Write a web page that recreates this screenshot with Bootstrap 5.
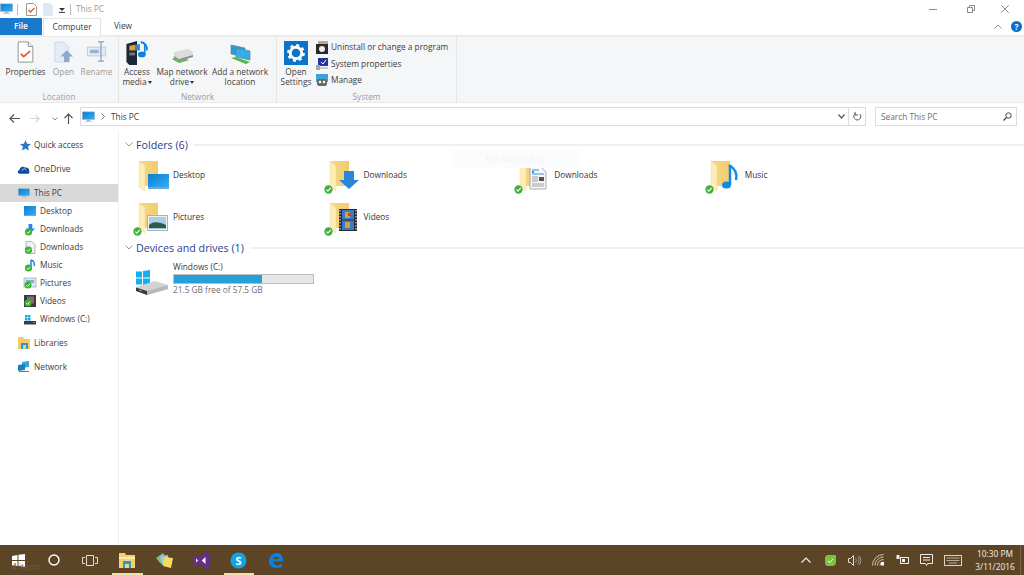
<!DOCTYPE html>
<html lang="en">
<head>
<meta charset="utf-8">
<title>This PC</title>
<link href="https://cdn.jsdelivr.net/npm/bootstrap@5.3.0/dist/css/bootstrap.min.css" rel="stylesheet">
<style>
html,body{height:100%;overflow:hidden;background:#fff}
body{font-family:"Open Sans","Noto Sans","Liberation Sans",sans-serif;font-size:8.3px;line-height:10px;color:#3a3a3a}
svg{display:block;flex:none;overflow:visible}
.shell{width:1024px;height:575px;position:relative}
.ttl{height:18px}
.ttl-sep{width:1px;height:11px;background:#b9b9b9}
.ttl-name{color:#9a9a9a;margin-left:5px}
.m4{margin-left:4px}.m5{margin-left:5px}.m6{margin-left:6px}.m8{margin-left:8px}
.wctl{margin-left:auto;gap:26px;padding-right:15px}
.tabrow{height:17px}
.tb-file{width:42px;background:#1979ca;color:#fff;line-height:16px;text-align:center;font-weight:600}
.tb-on{width:58px;margin-left:1px;line-height:15px;text-align:center;border:1px solid #e4e4e4;border-bottom:0;background:#fff;height:18px;position:relative;z-index:1}
.tb-off{width:44px;line-height:16px;text-align:center}
.helpers{margin-left:auto;gap:9px;padding-right:2px}
.rib{height:68px;background:#f5f6f7;border-top:2px solid #ebebeb;border-bottom:1px solid #e9e9e9}
.rgrp{height:66px;border-right:1px solid #e4e5e6;padding-top:4px;position:relative}
.g1{width:119px;padding-left:4px}.g2{width:158px}.g3{width:180px}
.rlabel{position:absolute;left:0;right:0;bottom:1px;text-align:center;color:#9c9c9c}
.rbtn{text-align:center;color:#3f3f3f;line-height:10px}
.ico{height:24px;margin-bottom:2px}
.ico svg{margin:0 auto}
.off{color:#9b9b9b}
.w43{width:43px}.w33{width:33px}.w36{width:36px}.w54{width:54px}.w62{width:62px}.w38{width:38px}
.caret{display:inline-block;border-top:3px solid #333;border-left:2px solid transparent;border-right:2px solid transparent;vertical-align:1px;margin-left:1px}
.rsmall{height:16.5px;gap:3px;padding-left:1px;white-space:nowrap}
.smallcol{margin-top:-2px}
.addr{height:27px;padding-top:4px}
.nav-ic{width:20px}
.pathbox{width:769px;height:19px;border:1px solid #dcdcdc;margin-left:7px;padding:0 3px 0 1px;gap:6px}
.refbox{width:17px;height:19px;border:1px solid #dcdcdc;border-left:0}
.srch{width:142px;height:19px;border:1px solid #dcdcdc;margin-left:9px;padding:0 4px 0 5px;color:#6e6e6e}
.body-row{height:415px}
.side{width:119px;border-right:1px solid #f0f0f0;padding-top:6px;flex:none}
.srow{height:18px;padding-left:18px;gap:4px;white-space:nowrap}
.srow.sub{padding-left:24px}
.srow.cur{background:#d9d9d9;width:118px}
.sgap{height:6px}
.star{margin-left:2px;margin-right:-1px}
.pane{flex:1;padding:5px 0 0 6px;position:relative}
.hd{height:19px;color:#2a3d92;font-size:10.7px;gap:3px;white-space:nowrap}
.hd i{display:block;flex:1;height:2px;background:#f0f0f0;margin-left:3px}
.tiles{display:grid;grid-template-columns:repeat(4,190.6px);grid-auto-rows:42px;padding-left:11px}
.tile{gap:3px;color:#333}
.drive{gap:4px;padding-top:5px;padding-left:10px;height:40px}
.drive svg{margin-top:8px}
.dname{margin-bottom:2px}
.dbar{width:141px;height:10px;background:#e6e6e6;border:1px solid #bcbcbc}
.dfill{height:100%;background:#26a0da}
.dfree{color:#6d6d6d;margin-top:1px}
.ghost{position:absolute;left:332px;top:20px;width:130px;height:18px;background:#fbfcfe;color:#f1f3f6;text-align:center;line-height:18px}
.tbar{height:30px;background:#5c4427;color:#fff;position:relative}
.tb36{width:36px;height:30px}
.tb37{width:37px;height:30px;position:relative}
.tb38{width:38px;height:30px;position:relative}
.runb::after{content:"";position:absolute;left:4px;right:3px;bottom:0;height:2px;background:#f3dcb0}
.tray{margin-left:auto;height:30px;padding-right:3px}
.tr-i{height:30px;width:24px}
.tr-w{width:30px}
.clock{width:50px;text-align:center;line-height:13px;color:#f4efe6;margin-left:2px}
.gitems{position:absolute;left:12px;top:17px;color:#6e5a42}
.edge-r{width:1px;height:30px;background:#7a6548}
</style>
</head>
<body>
<svg width="0" height="0" class="position-absolute">
<defs>
<linearGradient id="fd" x1="0" y1="0" x2="1" y2="0"><stop offset="0" stop-color="#f7d98a"/><stop offset="1" stop-color="#f2cb6c"/></linearGradient>
<linearGradient id="sc" x1="0" y1="0" x2="1" y2="1"><stop offset="0" stop-color="#0b7fd6"/><stop offset="1" stop-color="#35adf0"/></linearGradient>
<symbol id="folder" viewBox="0 0 34 34">
<path d="M3 3h19v25H9z" fill="url(#fd)"/>
<path d="M3 3l6 5v25l-6-4z" fill="#fdeeb8" stroke="#ecd58d" stroke-width=".4"/>
</symbol>
<symbol id="chk" viewBox="0 0 10 10"><circle cx="5" cy="5" r="4.600" fill="#3fb23a"/><path d="M2.600 5.200l1.700 1.700 3.200-3.600" fill="none" stroke="#fff" stroke-width="1.200"/></symbol>
<symbol id="pc" viewBox="0 0 14 12"><rect x=".5" y=".5" width="13" height="8" fill="url(#sc)" stroke="#8aa7c0" stroke-width=".6"/><rect x="5" y="9" width="4" height="1.400" fill="#a9b5c0"/><rect x="3" y="10.300" width="8" height="1.200" fill="#c6ced6"/></symbol>
<symbol id="mini-dl" viewBox="0 0 12 14"><path d="M4.500 1h4v5h3l-5 5-5-5h3z" fill="#2b86d9"/></symbol>
</defs>
</svg>

<div class="shell d-flex flex-column">
  <div class="ttl d-flex align-items-center">
    <svg width="13" height="12"><use href="#pc"/></svg>
    <span class="ttl-sep m4"></span>
    <svg class="m8" width="11" height="13" viewBox="0 0 11 13"><path d="M.5.500h7l3 3v9H.5z" fill="#fff" stroke="#9a9a9a"/><path d="M2.500 7l2 2 4-4" fill="none" stroke="#e4572a" stroke-width="1.300"/></svg>
    <svg class="m6" width="10" height="13" viewBox="0 0 10 13"><path d="M0 0h7l3 3v10H0z" fill="#dfe8f5"/></svg>
    <svg class="m6" width="6" height="7" viewBox="0 0 6 7"><path d="M0 2h6L3 5z" fill="#333"/><path d="M0 6.400h6" stroke="#333"/></svg>
    <span class="ttl-sep m5"></span>
    <span class="ttl-name">This PC</span>
    <div class="wctl d-flex align-items-center">
      <svg width="8" height="8" viewBox="0 0 8 8"><path d="M0 4.500h8" stroke="#8a8a8a"/></svg>
      <svg width="8" height="8" viewBox="0 0 8 8" class="ms-1"><path d="M.5 2.500h5v5h-5zM2.500 2.500v-2h5v5h-2" fill="none" stroke="#8a8a8a"/></svg>
      <svg width="8" height="8" viewBox="0 0 8 8"><path d="M.3.300l7.400 7.400M7.700.300L.3 7.700" stroke="#8a8a8a"/></svg>
    </div>
  </div>

  <div class="tabrow d-flex">
    <div class="tb-file">File</div>
    <div class="tb-on">Computer</div>
    <div class="tb-off">View</div>
    <div class="helpers d-flex align-items-center">
      <svg width="8" height="5" viewBox="0 0 8 5"><path d="M.5 4.500L4 1l3.500 3.500" fill="none" stroke="#9a9a9a"/></svg>
      <svg width="11" height="11" viewBox="0 0 11 11"><circle cx="5.500" cy="5.500" r="5.500" fill="#0b6fc7"/><text x="5.500" y="8.500" font-size="8.500" font-weight="700" text-anchor="middle" fill="#fff" font-family="Open Sans">?</text></svg>
    </div>
  </div>

  <div class="rib d-flex">
    <div class="rgrp g1 d-flex">
      <div class="rbtn w43">
        <div class="ico"><svg width="17" height="22" viewBox="0 0 18 24"><path d="M1 1h11l5 5v17H1z" fill="#fff" stroke="#8c8c8c"/><path d="M12 1v5h5" fill="#eee" stroke="#8c8c8c"/><path d="M4 14l3 3 7-6" fill="none" stroke="#e5532a" stroke-width="1.800"/></svg></div>
        Properties
      </div>
      <div class="rbtn w33 off">
        <div class="ico"><svg width="20" height="22" viewBox="0 0 22 24"><path d="M1 1h10l5 5v17H1z" fill="#e3ebf7" stroke="#c9d6e8"/><path d="M14 10l7 7h-4v6h-6v-6H7z" fill="#8fa9c6"/></svg></div>
        Open
      </div>
      <div class="rbtn w33 off">
        <div class="ico"><svg width="22" height="21" viewBox="0 0 24 24"><rect x="1" y="7" width="21" height="10" fill="#e3ebf7" stroke="#b9c8da"/><rect x="4" y="10" width="10" height="4" fill="#9db3cc"/><path d="M13 1h7M16.500 1v22M13 23h7" stroke="#8ba3bf" stroke-width="1.500" fill="none"/></svg></div>
        Rename
      </div>
      <div class="rlabel">Location</div>
    </div>
    <div class="rgrp g2 d-flex">
      <div class="rbtn w36">
        <div class="ico"><svg width="24" height="24" viewBox="0 0 24 25"><path d="M1 3l11-3v25H4L1 22z" fill="#1d2733"/><path d="M4 5l6-1v6H4z" fill="#d9a13b"/><path d="M10 4l5-1v7h-5z" fill="#3a84c9"/><path d="M4 12h6v3H4z" fill="#6c7a89"/><path d="M16 1c5 1 7 5 6 9" fill="none" stroke="#0f7fe0" stroke-width="2"/><ellipse cx="17" cy="14" rx="4" ry="3" fill="#0f7fe0"/><path d="M20 14V3" stroke="#0f7fe0" stroke-width="1.600"/></svg></div>
        Access<br>media<span class="caret"></span>
      </div>
      <div class="rbtn w54">
        <div class="ico"><svg width="23" height="24" viewBox="0 0 23 24"><path d="M3 11l14-3 5 3v3L8 18l-5-3z" fill="#dcdcdc"/><path d="M3 15l5 3 14-4v2L8 20l-5-3z" fill="#8b8b8b"/><path d="M1 18l7 4 10-3-3-1-7 2-5-3z" fill="#4fb748"/></svg></div>
        Map network<br>drive<span class="caret"></span>
      </div>
      <div class="rbtn w62">
        <div class="ico"><svg width="21" height="24" viewBox="0 0 21 24"><path d="M1 4l14 3v9L1 13z" fill="#21a0e0" stroke="#67808f" stroke-width=".7"/><path d="M6 7l14 3v9L6 16z" fill="#35aee6" stroke="#67808f" stroke-width=".7"/><path d="M1 17l15 6 4-2-15-5z" fill="#4fb748"/></svg></div>
        Add a network<br>location
      </div>
      <div class="rlabel">Network</div>
    </div>
    <div class="rgrp g3 d-flex">
      <div class="rbtn w38">
        <div class="ico"><svg width="24" height="24" viewBox="0 0 25 25"><rect width="25" height="25" fill="#0b74c9"/><circle cx="12.500" cy="12.500" r="6" fill="none" stroke="#fff" stroke-width="3"/><circle cx="12.500" cy="12.500" r="8" fill="none" stroke="#fff" stroke-width="2.500" stroke-dasharray="3.100 3.180"/></svg></div>
        Open<br>Settings
      </div>
      <div class="smallcol">
        <div class="rsmall d-flex align-items-center"><svg width="12" height="13" viewBox="0 0 12 13"><rect y="3" width="12" height="10" fill="#2a2a2a"/><rect x="2" y="0" width="10" height="3" fill="#b9a98c"/><circle cx="6" cy="8" r="3" fill="#eee"/></svg>Uninstall or change a program</div>
        <div class="rsmall d-flex align-items-center"><svg width="12" height="12" viewBox="0 0 12 12"><rect x="2" y="0" width="10" height="8" fill="#27349a"/><path d="M5 4l2 2 3-4" stroke="#fff" fill="none"/><rect y="7" width="4" height="5" fill="#9ea7ad"/><rect x="4" y="9" width="8" height="2" fill="#c4cbd1"/></svg>System properties</div>
        <div class="rsmall d-flex align-items-center"><svg width="12" height="12" viewBox="0 0 12 12"><rect width="12" height="8" fill="#3ea0dc"/><rect x="1" y="5" width="10" height="7" rx="2" fill="#6b6b6b"/><circle cx="4" cy="8" r="1.200" fill="#fff"/><circle cx="8" cy="8" r="1.200" fill="#fff"/></svg>Manage</div>
      </div>
      <div class="rlabel">System</div>
    </div>
  </div>

  <div class="addr d-flex">
    <div class="nav-ic d-flex justify-content-end align-items-center ps-2"><svg width="11" height="9" viewBox="0 0 11 9"><path d="M5 .5L1 4.500l4 4M1 4.500h10" fill="none" stroke="#555" stroke-width="1.200"/></svg></div>
    <div class="nav-ic d-flex justify-content-end align-items-center"><svg width="10" height="9" viewBox="0 0 11 9"><path d="M6 .5l4 4-4 4M10 4.500H0" fill="none" stroke="#d4d4d4" stroke-width="1.200"/></svg></div>
    <div class="d-flex align-items-center ms-2 ps-1"><svg width="6" height="4" viewBox="0 0 6 4"><path d="M.5.500L3 3 5.500.500" fill="none" stroke="#8a8a8a"/></svg></div>
    <div class="d-flex align-items-center m6"><svg width="9" height="11" viewBox="0 0 9 11"><path d="M.5 5L4.500 1l4 4M4.500 1v10" fill="none" stroke="#555" stroke-width="1.200"/></svg></div>
    <div class="pathbox d-flex align-items-center">
      <svg width="13" height="12"><use href="#pc"/></svg>
      <svg width="4" height="7" viewBox="0 0 4 7"><path d="M.5.500l3 3-3 3" fill="none" stroke="#777"/></svg>
      <span>This PC</span>
      <svg class="ms-auto" width="7" height="5" viewBox="0 0 7 5"><path d="M.5.500L3.500 4l3-3.500" fill="none" stroke="#555" stroke-width="1.200"/></svg>
    </div>
    <div class="refbox d-flex align-items-center justify-content-center"><svg width="9" height="9" viewBox="0 0 9 9"><path d="M6.800 2A3.500 3.500 0 1 1 2.500 1.500M2 0v3h3" fill="none" stroke="#555"/></svg></div>
    <div class="srch d-flex align-items-center justify-content-between">
      <span>Search This PC</span>
      <svg width="9" height="9" viewBox="0 0 9 9"><circle cx="5.500" cy="3.500" r="2.700" fill="none" stroke="#444"/><path d="M3.500 5.500L.5 8.500" stroke="#444" stroke-width="1.300"/></svg>
    </div>
  </div>

  <div class="body-row d-flex flex-grow-1">
    <nav class="side">
      <div class="srow d-flex align-items-center"><svg class="star" width="11" height="11" viewBox="0 0 11 11"><path d="M5.500 0l1.600 3.700 3.900.3-3 2.600.9 4-3.400-2.100L2 10.600l.9-4-3-2.600 4-.3z" fill="#2a78c8"/></svg><span>Quick access</span></div>
      <div class="sgap"></div>
      <div class="srow d-flex align-items-center"><svg width="12" height="9" viewBox="0 0 13 9"><path d="M2 9a2 2 0 0 1-.5-4A4 4 0 0 1 8 2.500 3 3 0 0 1 12 6a2 2 0 0 1-1 3z" fill="#0e4fa3"/><path d="M4 5.500l3-2 2 1.500" fill="none" stroke="#fff" stroke-width=".7"/></svg><span>OneDrive</span></div>
      <div class="sgap"></div>
      <div class="srow cur d-flex align-items-center"><svg width="12" height="11"><use href="#pc"/></svg><span>This PC</span></div>
      <div class="srow sub d-flex align-items-center"><svg width="12" height="10" viewBox="0 0 12 10"><rect width="12" height="9" fill="url(#sc)"/><rect y="9" width="12" height="1" fill="#6ca9d6"/></svg><span>Desktop</span></div>
      <div class="srow sub d-flex align-items-center"><svg width="12" height="13" viewBox="0 0 12 13"><use href="#mini-dl"/><circle cx="4.500" cy="9" r="3.600" fill="#3fb23a"/><path d="M2.800 9.100l1.300 1.300 2.300-2.600" fill="none" stroke="#fff" stroke-width=".9"/></svg><span>Downloads</span></div>
      <div class="srow sub d-flex align-items-center"><svg width="12" height="13" viewBox="0 0 12 13"><path d="M2 .5h6l3 3v9H2z" fill="#f0f2f4" stroke="#9a9a9a" stroke-width=".7"/><circle cx="4.500" cy="9" r="3.600" fill="#3fb23a"/><path d="M2.800 9.100l1.300 1.300 2.300-2.600" fill="none" stroke="#fff" stroke-width=".9"/></svg><span>Downloads</span></div>
      <div class="srow sub d-flex align-items-center"><svg width="12" height="13" viewBox="0 0 12 13"><path d="M7 1c3 1 4 3 3 6" fill="none" stroke="#0f7fe0" stroke-width="1.400"/><path d="M7 1v8" stroke="#0f7fe0" stroke-width="1.400"/><circle cx="4.500" cy="9" r="3.600" fill="#3fb23a"/><path d="M2.800 9.100l1.300 1.300 2.300-2.600" fill="none" stroke="#fff" stroke-width=".9"/></svg><span>Music</span></div>
      <div class="srow sub d-flex align-items-center"><svg width="12" height="12" viewBox="0 0 12 12"><rect y="1" width="12" height="9" fill="#dfe6ee" stroke="#97a5b4" stroke-width=".7"/><rect x="2" y="3" width="8" height="3" fill="#7fb2d6"/><circle cx="4" cy="8" r="3.500" fill="#3fb23a"/><path d="M2.300 8.100l1.300 1.300 2.300-2.600" fill="none" stroke="#fff" stroke-width=".9"/></svg><span>Pictures</span></div>
      <div class="srow sub d-flex align-items-center"><svg width="12" height="12" viewBox="0 0 12 12"><rect width="12" height="12" fill="#3a3a3a"/><rect x="3" y="1.500" width="7" height="7" fill="#3f7fc4"/><path d="M6 3h3v3H6z" fill="#c8592c"/><circle cx="4" cy="8" r="3.500" fill="#3fb23a"/><path d="M2.300 8.100l1.300 1.300 2.300-2.600" fill="none" stroke="#fff" stroke-width=".9"/></svg><span>Videos</span></div>
      <div class="srow sub d-flex align-items-center"><svg width="12" height="11" viewBox="0 0 12 11"><path d="M1 1h2.500v2.500H1zM4 1h2.500v2.500H4zM1 4h2.500v2.500H1zM4 4h2.500v2.500H4z" fill="#14a7e6"/><path d="M0 7h12v3.500H0z" fill="#3c3c3c"/><path d="M9 8.500h1.500" stroke="#57c14c"/></svg><span>Windows (C:)</span></div>
      <div class="sgap"></div>
      <div class="srow d-flex align-items-center"><svg width="12" height="12" viewBox="0 0 12 12"><path d="M0 0h5l1 2h6v10H0z" fill="#f2cd68"/><path d="M3 6h7v6H8V8H5v4H3z" fill="#1e9be0"/></svg><span>Libraries</span></div>
      <div class="sgap"></div>
      <div class="srow d-flex align-items-center"><svg width="12" height="12" viewBox="0 0 12 12"><path d="M4 1l7-1v6l-7 1z" fill="#35a4dd"/><path d="M0 4l7-1v6l-7 1z" fill="#1d7fbd"/><path d="M1 10.500h10" stroke="#3c7fb0"/></svg><span>Network</span></div>
    </nav>

    <main class="pane">
      <div class="hd d-flex align-items-center"><svg width="8" height="5" viewBox="0 0 8 5"><path d="M.5.500L4 4 7.500.500" fill="none" stroke="#9a9a9a"/></svg><span>Folders (6)</span><i></i></div>
      <div class="ghost">Full-screen Snip</div>
      <div class="tiles">
        <div class="tile d-flex align-items-center">
          <svg width="34" height="34" viewBox="0 0 34 34"><use href="#folder" width="34" height="34"/><rect x="12" y="16" width="21" height="13" fill="url(#sc)"/><rect x="12" y="29" width="21" height="2" fill="#6ca9d6"/></svg>
          <span>Desktop</span>
        </div>
        <div class="tile d-flex align-items-center">
          <svg width="34" height="34" viewBox="0 0 34 34"><use href="#folder" width="34" height="34"/><path d="M17 13h10v9h5L22 31 12 22h5z" fill="#2b86d9"/><use href="#chk" x="-3" y="27" width="9" height="9"/></svg>
          <span>Downloads</span>
        </div>
        <div class="tile d-flex align-items-center">
          <svg width="34" height="34" viewBox="0 0 34 34"><use href="#folder" width="34" height="34"/><path d="M13 9h11l5 5v17H13z" fill="#f5f6f8" stroke="#9a9a9a" stroke-width=".8"/><path d="M15 12h7M15 16h12" stroke="#3d8fdc"/><path d="M15 14h2" stroke="#3d8fdc" stroke-width="2"/><path d="M15 19h6M15 21h6M15 23h6M15 26h12M15 28h12" stroke="#8d8d8d" stroke-width=".8"/><rect x="22" y="19" width="5" height="4" fill="#555"/><use href="#chk" x="-3" y="27" width="9" height="9"/></svg>
          <span>Downloads</span>
        </div>
        <div class="tile d-flex align-items-center">
          <svg width="34" height="34" viewBox="0 0 34 34"><use href="#folder" width="34" height="34"/><path d="M21 7c5 3 9 7 7 15" fill="none" stroke="#0f8ae6" stroke-width="2.500"/><path d="M22 7v20" stroke="#0f8ae6" stroke-width="2.500"/><ellipse cx="18.500" cy="27" rx="4.500" ry="3.600" fill="#0f8ae6"/><use href="#chk" x="-3" y="27" width="9" height="9"/></svg>
          <span>Music</span>
        </div>
        <div class="tile d-flex align-items-center">
          <svg width="34" height="34" viewBox="0 0 34 34"><use href="#folder" width="34" height="34"/><rect x="11.500" y="15.500" width="20" height="15" fill="#eef2f5" stroke="#a8b2bc"/><rect x="13" y="17" width="17" height="12" fill="#a9cfe6"/><path d="M13 25c5-4 10-3 17 0v4H13z" fill="#2f5a4a"/><path d="M13 28h17v1H13z" fill="#9cc4d4"/><use href="#chk" x="-3" y="27" width="9" height="9"/></svg>
          <span>Pictures</span>
        </div>
        <div class="tile d-flex align-items-center">
          <svg width="34" height="34" viewBox="0 0 34 34"><use href="#folder" width="34" height="34"/><rect x="12" y="9" width="18" height="22" fill="#2b2b2b"/><path d="M13 10v20M29 10v20" stroke="#ccc" stroke-width="1.200" stroke-dasharray="1.500 1.500"/><rect x="15" y="10" width="12" height="9.500" fill="#3978cc"/><rect x="15" y="20.500" width="12" height="9.500" fill="#3978cc"/><path d="M18 12h5v6h-5zM18 22h5v6h-5z" fill="#d0a332"/><path d="M21 13h3v3h-3z" fill="#c8472c"/><use href="#chk" x="-3" y="27" width="9" height="9"/></svg>
          <span>Videos</span>
        </div>
      </div>
      <div class="hd d-flex align-items-center"><svg width="8" height="5" viewBox="0 0 8 5"><path d="M.5.500L4 4 7.500.500" fill="none" stroke="#9a9a9a"/></svg><span>Devices and drives (1)</span><i></i></div>
      <div class="drive d-flex">
        <svg width="34" height="26" viewBox="0 0 34 26"><path d="M1 1.500h6v6H1zM8 1l7-1v7.500H8zM1 8.500h6v6H1zM8 8.500h7v7H8z" fill="#12b0ef"/><path d="M1 17l19-6 13 4v4L12 25 1 21z" fill="#d0d2d4"/><path d="M1 17.500l11 3.500v4L1 21z" fill="#3c3c3c"/><path d="M12 21l21-6v4L12 25z" fill="#b8b9ba"/><path d="M4 20l3 1" stroke="#5fc14a"/></svg>
        <div>
          <div class="dname">Windows (C:)</div>
          <div class="dbar"><div class="dfill" style="width:63%"></div></div>
          <div class="dfree">21.5 GB free of 57.5 GB</div>
        </div>
      </div>
    </main>
  </div>

  <footer class="tbar d-flex align-items-center">
    <div class="gitems">4 items</div>
    <div class="tb36 d-flex align-items-center justify-content-center"><svg width="13" height="13" viewBox="0 0 13 13"><path d="M0 2l5.500-1v5H0zM6.500 .8L13 0v6H6.500zM0 7h5.500v5L0 11.200zM6.500 7H13v6l-6.500-.9z" fill="#fff"/></svg></div>
    <div class="tb36 d-flex align-items-center justify-content-center"><svg width="12" height="12" viewBox="0 0 12 12"><circle cx="6" cy="6" r="5" fill="none" stroke="#fff" stroke-width="1.400"/></svg></div>
    <div class="tb36 d-flex align-items-center justify-content-center"><svg width="16" height="11" viewBox="0 0 16 11"><path d="M4.500.5h7v10h-7zM3 2.500H.5v6H3M13 2.500h2.500v6H13" fill="none" stroke="#e4dccf"/></svg></div>
    <div class="tb38 runb d-flex align-items-center justify-content-center"><svg width="16" height="15" viewBox="0 0 16 15"><path d="M0 0h6l1 2h9v13H0z" fill="#f4d06f"/><path d="M0 4h16v2H0z" fill="#fdeaaa"/><path d="M4 8h8v7h-2v-4H6v4H4z" fill="#1c9be2"/></svg></div>
    <div class="tb37 d-flex align-items-center justify-content-center"><svg width="18" height="15" viewBox="0 0 18 15"><path d="M0 5l7-5 4 6-6 5z" fill="#7cc26a"/><path d="M4 3l8-1 1 8-7 2z" fill="#9cc6e8"/><path d="M8 4l9 1-2 10-8-2z" fill="#f6dc5a"/></svg></div>
    <div class="tb37 d-flex align-items-center justify-content-center"><svg width="16" height="17" viewBox="0 0 16 17"><path d="M11.500 0L16 2v13l-4.500 2L5 10.800 1.800 13.400 0 12.400V4.600l1.800-1L5 6.200z" fill="#6a2c91"/><path d="M11.500 5L7.800 8.500l3.700 3.500z" fill="#fff"/><path d="M2 6.500v4l2-2z" fill="#fff"/></svg></div>
    <div class="tb37 runb d-flex align-items-center justify-content-center"><svg width="17" height="17" viewBox="0 0 17 17"><circle cx="8.500" cy="8.500" r="8" fill="#12a5e4"/><text x="8.500" y="12.500" font-size="11" font-weight="700" text-anchor="middle" fill="#fff" font-family="Open Sans">S</text></svg></div>
    <div class="tb37 d-flex align-items-center justify-content-center"><svg width="15" height="15" viewBox="0 0 15 15"><path d="M1 9C1 3 5 0 9 0c4 0 6 3 6 8.500H5c0 3 4 5 9 2.500v3c-6 2-13 1-13-5.500zM5 6h6c0-3-5-3-6 0z" fill="#0f7fd8"/></svg></div>

    <div class="tray d-flex align-items-center">
      <div class="tr-i d-flex align-items-center justify-content-center"><svg width="10" height="6" viewBox="0 0 10 6"><path d="M.5 5.500L5 1l4.500 4.500" fill="none" stroke="#f2f2f2" stroke-width="1.200"/></svg></div>
      <div class="tr-i d-flex align-items-center justify-content-center"><svg width="11" height="11" viewBox="0 0 11 11"><path d="M2 0h9v7a4 4 0 0 1-4 4H3a3 3 0 0 1-3-3V2z" fill="#7bc142"/><path d="M3 6l2 1.500L8 4" stroke="#fff" fill="none"/></svg></div>
      <div class="tr-i d-flex align-items-center justify-content-center"><svg width="13" height="11" viewBox="0 0 13 11"><path d="M.5 3.500h2l3-3v10l-3-3h-2z" fill="none" stroke="#ddd"/><path d="M7.500 3.500a3 3 0 0 1 0 4M9.500 2a5 5 0 0 1 0 7M11 .8a7 7 0 0 1 0 9.400" fill="none" stroke="#b8ab96" stroke-width=".8"/></svg></div>
      <div class="tr-i d-flex align-items-center justify-content-center"><svg width="13" height="12" viewBox="0 0 13 12"><path d="M.5 11.500a11 11 0 0 1 11-11M3 11.500a8.500 8.500 0 0 1 8.500-8.500M5.500 11.500a6 6 0 0 1 6-6M8 11.500a3.500 3.500 0 0 1 3.500-3.500" fill="none" stroke="#d8d2c6" stroke-width=".9"/><path d="M9 8h3v3.500H9z" fill="#fff"/></svg></div>
      <div class="tr-i d-flex align-items-center justify-content-center"><svg width="13" height="10" viewBox="0 0 13 10"><rect x="4.500" y="2.500" width="8" height="6" fill="none" stroke="#eee"/><rect x="6" y="4" width="3" height="3" fill="#eee"/><path d="M.5 0h3v4h-3z" fill="#eee"/></svg></div>
      <div class="tr-i d-flex align-items-center justify-content-center"><svg width="13" height="13" viewBox="0 0 13 13"><path d="M.5.500h12v9h-5l-1 2-1-2h-5zM3 3.500h7M3 6h7" fill="none" stroke="#eee"/></svg></div>
      <div class="tr-i tr-w d-flex align-items-center justify-content-center"><svg width="18" height="11" viewBox="0 0 18 11"><rect x=".5" y=".5" width="17" height="10" fill="none" stroke="#d8d2c6"/><path d="M2.500 3h13M2.500 5.500h13M5 8h8" stroke="#b8ab96"/></svg></div>
      <div class="clock">10:30 PM<br>3/11/2016</div>
      <div class="edge-r"></div>
    </div>
  </footer>
</div>
</body>
</html>
